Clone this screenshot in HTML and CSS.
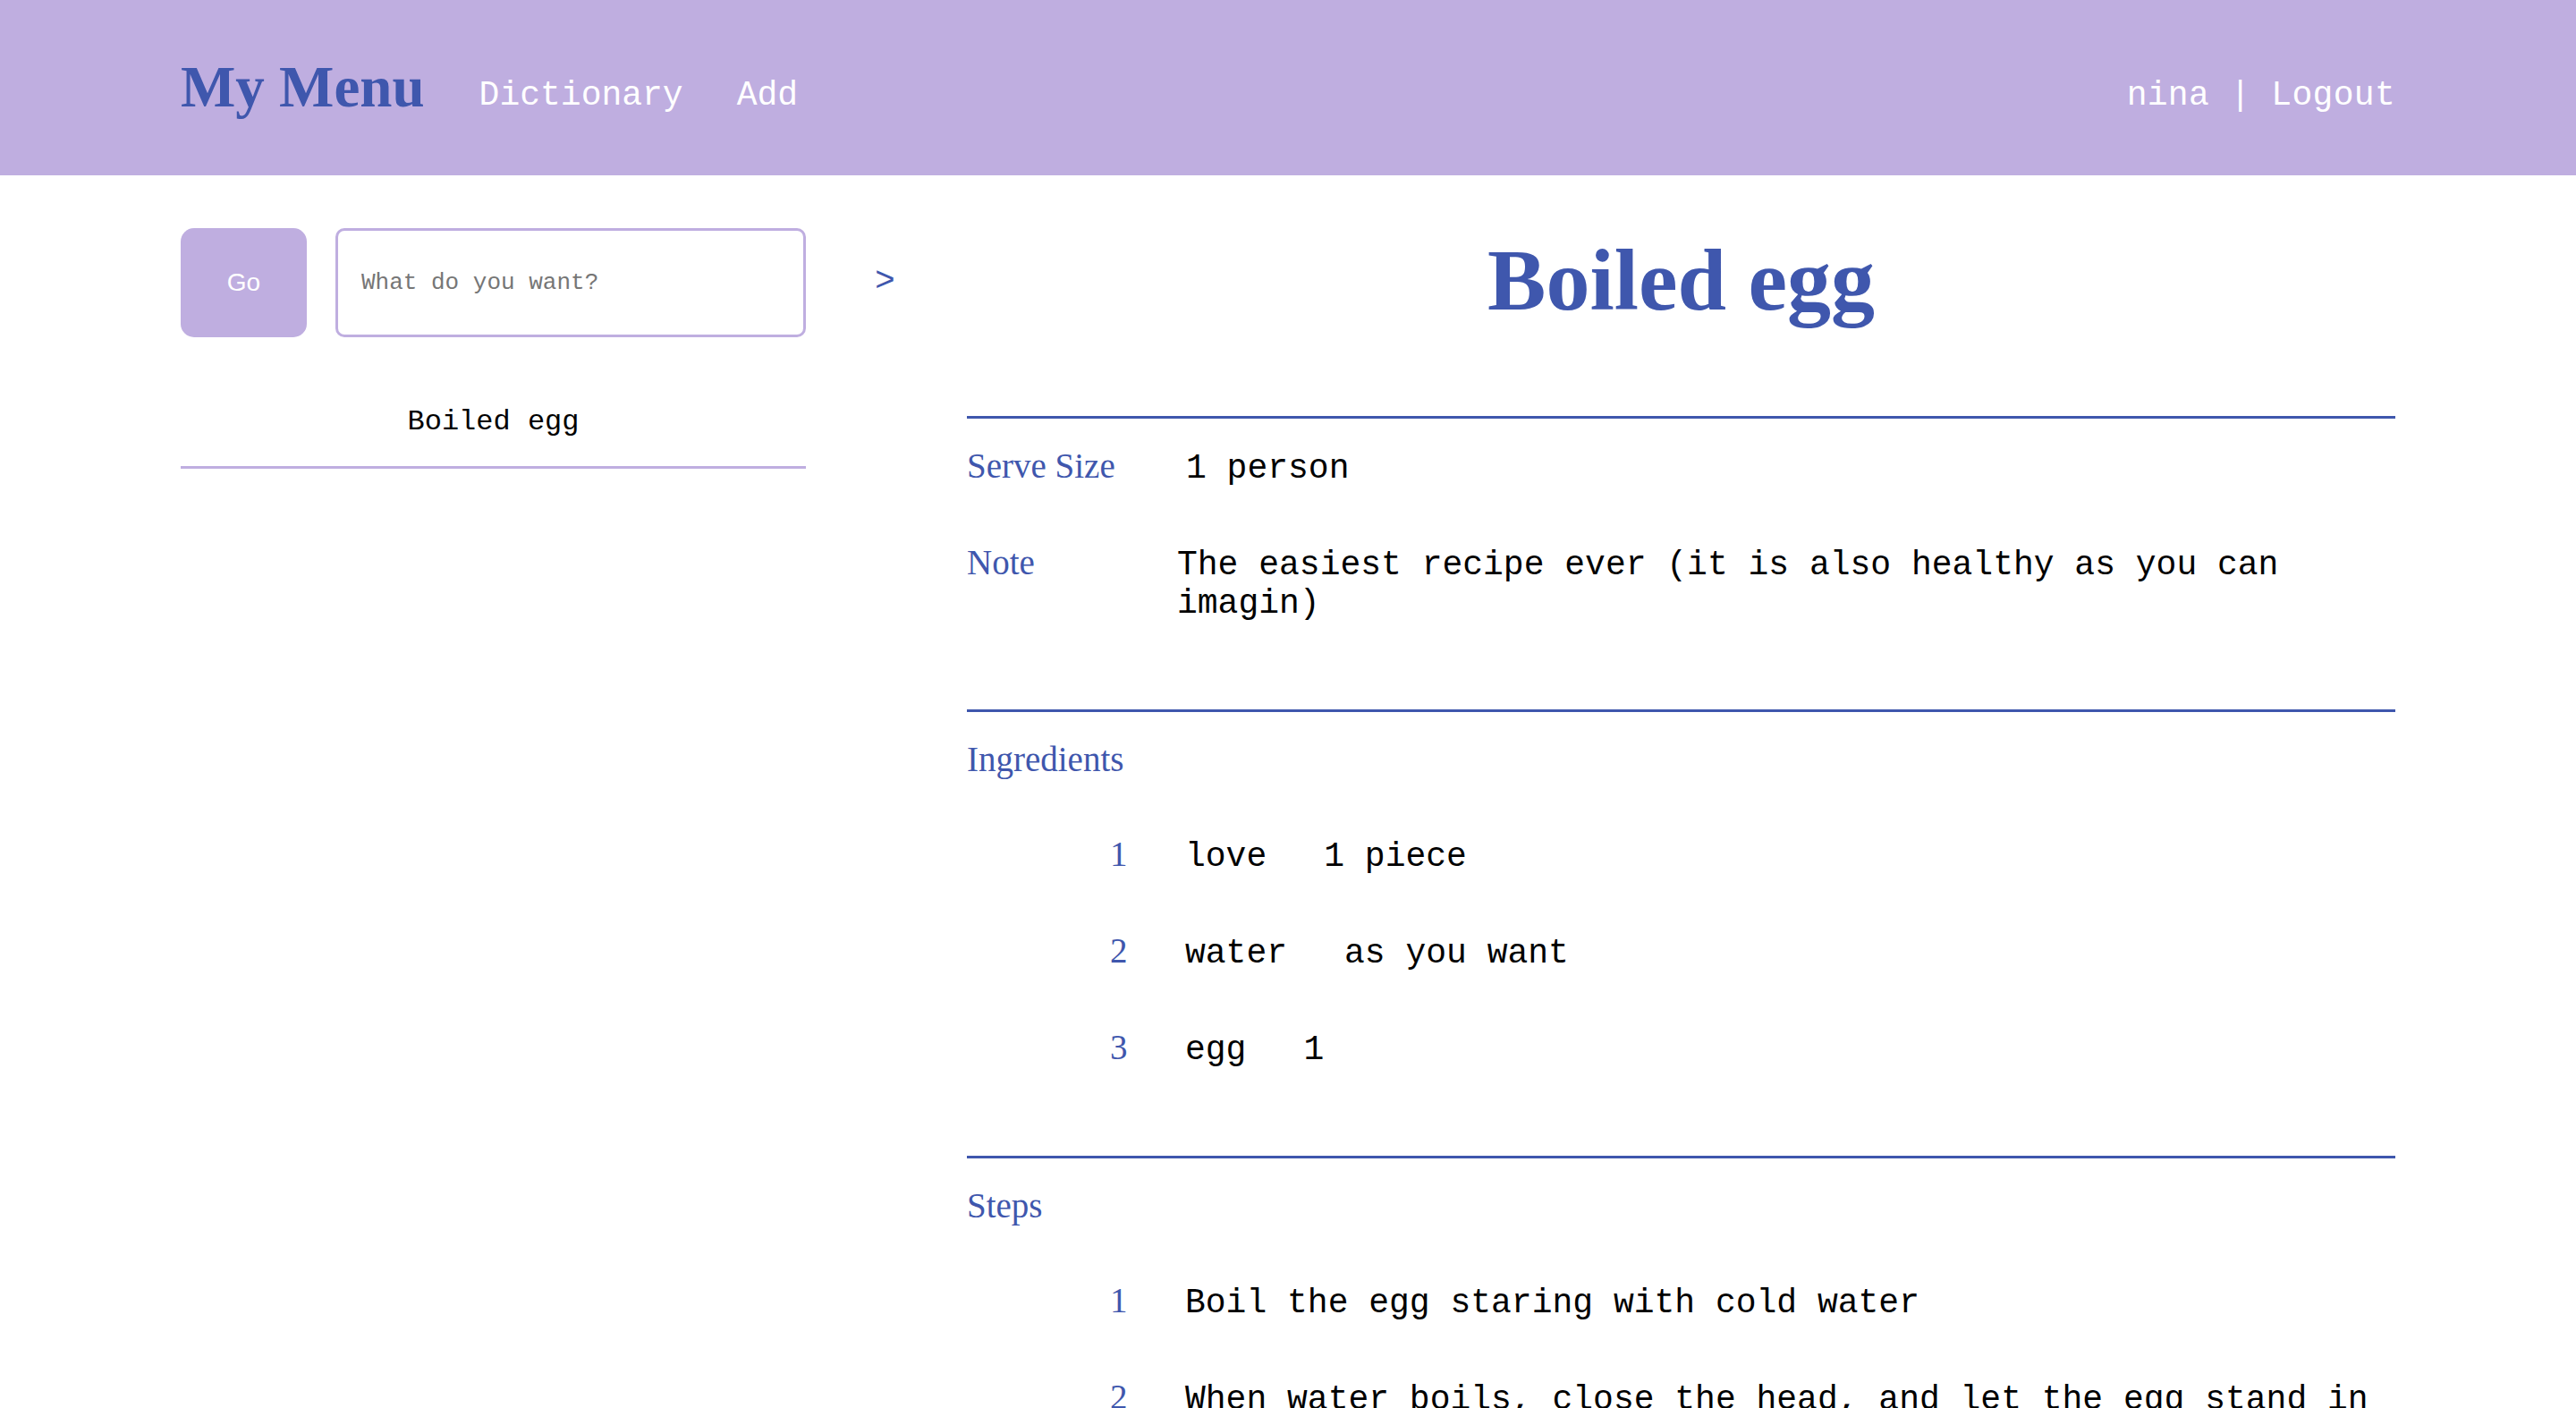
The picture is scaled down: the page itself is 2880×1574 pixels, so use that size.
FILE: index.html
```html
<!DOCTYPE html>
<html lang="en">
<head>
<meta charset="utf-8">
<title>My Menu - Boiled egg</title>
<link rel="stylesheet" href="styles.css">
</head>
<body>
<header class="topbar">
  <div class="brand-group">
    <a class="brand" href="#">My Menu</a>
    <nav class="nav">
      <a class="nav-link nav-dict" href="#">Dictionary</a>
      <a class="nav-link nav-add" href="#">Add</a>
    </nav>
  </div>
  <div class="user">nina | Logout</div>
</header>

<div class="page">
  <aside class="sidebar">
    <form class="search">
      <button class="go" type="button">Go</button>
      <input class="query" type="text" placeholder="What do you want?">
    </form>
    <ul class="recipe-list">
      <li>Boiled egg</li>
    </ul>
  </aside>

  <div class="toggle">&gt;</div>

  <main class="recipe">
    <h1 class="title">Boiled egg</h1>

    <section class="section first">
      <div class="field">
        <div class="label">Serve Size</div>
        <div class="value">1 person</div>
      </div>
      <div class="field field-note">
        <div class="label">Note</div>
        <div class="value">The easiest recipe ever (it is also healthy as you can imagin)</div>
      </div>
    </section>

    <section class="section">
      <div class="label">Ingredients</div>
      <ol class="items">
        <li><span class="num">1</span><span class="ing"><span>love</span><span>1 piece</span></span></li>
        <li><span class="num">2</span><span class="ing"><span>water</span><span>as you want</span></span></li>
        <li><span class="num">3</span><span class="ing"><span>egg</span><span>1</span></span></li>
      </ol>
    </section>

    <section class="section">
      <div class="label">Steps</div>
      <ol class="items">
        <li><span class="num">1</span><span class="value">Boil the egg staring with cold water</span></li>
        <li><span class="num">2</span><span class="value">When water boils, close the head, and let the egg stand in the hot water for 10 minutes</span></li>
      </ol>
    </section>
  </main>
</div>
</body>
</html>
```

FILE: styles.css
```css
body {
  margin: 0;
  background: #ffffff;
  color: #000000;
  font-family: "Liberation Mono", "Courier New", monospace;
}

a {
  text-decoration: none;
  color: inherit;
}

.topbar {
  height: 196px;
  box-sizing: border-box;
  background: #BFAEE0;
  padding: 0 202px;
  display: flex;
  justify-content: space-between;
  align-items: flex-start;
}

.brand-group {
  display: flex;
  align-items: flex-start;
}

.brand {
  margin-top: 60px;
  font-family: "Liberation Serif", "Times New Roman", serif;
  font-weight: bold;
  font-size: 65px;
  line-height: 75px;
  color: #3F57AD;
}

.nav {
  display: flex;
}

.nav-link,
.user {
  margin-top: 85px;
  font-size: 38px;
  line-height: 43px;
  color: #ffffff;
}

.user {
  letter-spacing: 0.3px;
}

.nav-dict {
  margin-left: 61px;
}

.nav-add {
  margin-left: 60px;
}

.page {
  display: flex;
  align-items: flex-start;
  padding: 59px 202px 0;
}

.sidebar {
  width: 699px;
  flex: none;
}

.search {
  display: flex;
  gap: 32px;
  height: 122px;
  margin: 0;
}

.go {
  width: 141px;
  height: 122px;
  flex: none;
  border: 0;
  border-radius: 15px;
  background: #BFAEE0;
  color: #ffffff;
  font-family: "Liberation Sans", Arial, sans-serif;
  font-size: 28px;
  padding: 0;
}

.query {
  flex: 1;
  min-width: 0;
  height: 122px;
  box-sizing: border-box;
  border: 3px solid #BFAEE0;
  border-radius: 10px;
  padding: 0 0 0 26px;
  font-family: "Liberation Mono", "Courier New", monospace;
  font-size: 26px;
  color: #000;
  outline: none;
}

.query::placeholder {
  color: #767676;
}

.recipe-list {
  list-style: none;
  margin: 0;
  padding: 0;
}

.recipe-list li {
  text-align: center;
  font-size: 32px;
  line-height: 36px;
  padding: 77px 0 31px;
  border-bottom: 3px solid #BFAEE0;
}

.toggle {
  width: 180px;
  flex: none;
  box-sizing: border-box;
  padding: 38px 0 0 77px;
  font-size: 38px;
  line-height: 43px;
  color: #3F57AD;
}

.recipe {
  flex: 1;
  min-width: 0;
}

.title {
  margin: 0;
  padding-top: 2px;
  text-align: center;
  font-family: "Liberation Serif", "Times New Roman", serif;
  font-weight: bold;
  font-size: 98px;
  line-height: 113px;
  color: #3F57AD;
}

.section {
  border-top: 3px solid #3F57AD;
  padding: 30px 0 97px;
}

.section.first {
  margin-top: 95px;
}

.label,
.num {
  font-family: "Liberation Serif", "Times New Roman", serif;
  font-size: 39px;
  line-height: 45px;
  color: #3F57AD;
}

.value,
.ing {
  font-size: 38px;
  line-height: 43px;
}

.field {
  display: grid;
  grid-template-columns: 245px 1fr;
  align-items: baseline;
}

.field-note {
  grid-template-columns: 235px 1fr;
}

.field + .field {
  margin-top: 61px;
}

.items {
  list-style: none;
  margin: 0;
  padding: 0 0 0 160px;
}

.items li {
  display: grid;
  grid-template-columns: 84px 1fr;
  align-items: baseline;
  margin-top: 61px;
}

.ing {
  display: flex;
  gap: 64px;
}
```
